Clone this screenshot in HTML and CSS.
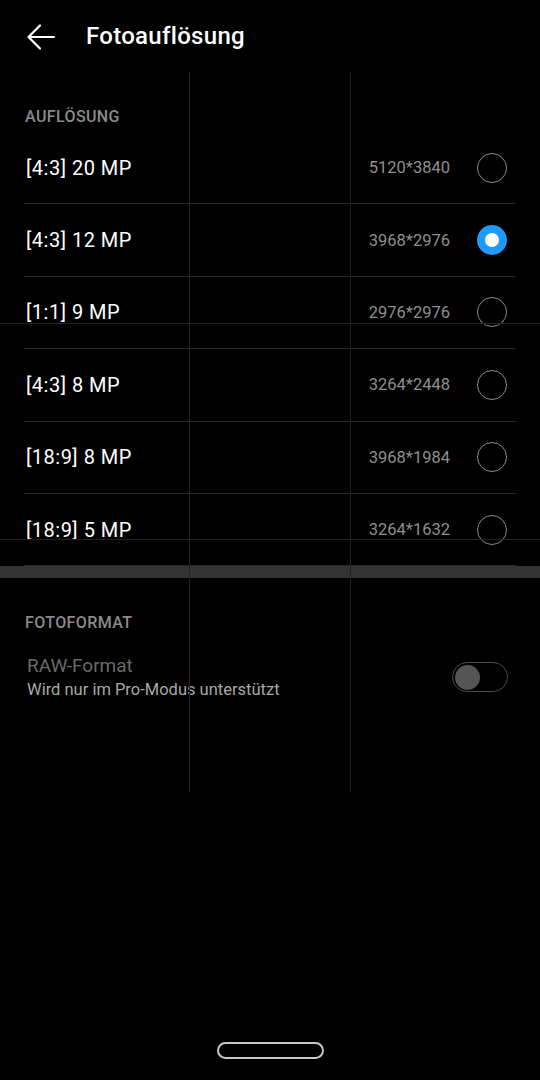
FILE: index.html
```html
<!DOCTYPE html>
<html lang="de">
<head>
    <meta charset="UTF-8">
    <meta name="viewport" content="width=device-width, initial-scale=1.0">
    <title>Fotoauflösung</title>
    <link rel="stylesheet" href="styles.css">
</head>
<body>
    <div class="screen">
        <header class="topbar">
            <svg class="back" width="30" height="30" viewBox="0 0 30 30">
                <path d="M28 15H3M14 3.5L2.5 15L14 26.5" fill="none" stroke="#fff" stroke-width="2.2" stroke-linecap="round" stroke-linejoin="round"/>
            </svg>
            <h1 class="title">Fotoauflösung</h1>
        </header>

        <div class="section-label">AUFLÖSUNG</div>
        <ul class="list">
            <li class="row"><span class="name">[4:3] 20 MP</span><span class="size">5120*3840</span><span class="radio"></span></li>
            <li class="row"><span class="name">[4:3] 12 MP</span><span class="size">3968*2976</span><span class="radio checked"></span></li>
            <li class="row"><span class="name">[1:1] 9 MP</span><span class="size">2976*2976</span><span class="radio"></span></li>
            <li class="row"><span class="name">[4:3] 8 MP</span><span class="size">3264*2448</span><span class="radio"></span></li>
            <li class="row"><span class="name">[18:9] 8 MP</span><span class="size">3968*1984</span><span class="radio"></span></li>
            <li class="row"><span class="name">[18:9] 5 MP</span><span class="size">3264*1632</span><span class="radio"></span></li>
        </ul>
        <div class="band"></div>

        <div class="section-label">FOTOFORMAT</div>
        <div class="switch-row">
            <div class="switch-text">
                <div class="switch-title">RAW-Format</div>
                <div class="switch-sub">Wird nur im Pro-Modus unterstützt</div>
            </div>
            <span class="toggle"><span class="knob"></span></span>
        </div>

        <div class="navbar"><span class="pill"></span></div>

        <!-- camera grid over the list -->
        <div class="grid">
            <span class="vline v1"></span>
            <span class="vline v2"></span>
            <span class="hline h1"></span>
            <span class="hline h2"></span>
        </div>
    </div>
</body>
</html>
```

FILE: styles.css
```css
* {
    box-sizing: border-box;
}
body {
    margin: 0;
    background: #000;
    font-family: Roboto, "Noto Sans", sans-serif;
    color: #fff;
}
.screen {
    position: relative;
    height: 1080px;
    display: flex;
    flex-direction: column;
    overflow: hidden;
}
.topbar {
    height: 72px;
    display: flex;
    align-items: center;
    padding-left: 26px;
}
.back {
    display: block;
    margin-top: 1px;
}
.title {
    margin: 0 0 0 30px;
    font-size: 24px;
    font-weight: 500;
    letter-spacing: 0.3px;
}
.section-label {
    padding: 35px 25px 5px;
    line-height: 20px;
    font-size: 16px;
    font-weight: 500;
    color: #8a8a8a;
    letter-spacing: 0.4px;
}
.list {
    list-style: none;
    margin: 0;
    padding: 0 24px;
}
.row {
    height: 72.4px;
    display: flex;
    align-items: center;
    border-bottom: 1px solid #2a2a2a;
}
.name {
    flex: 1;
    padding-left: 2px;
    font-size: 20px;
    font-weight: 400;
    letter-spacing: 0.5px;
}
.size {
    font-size: 16.5px;
    color: #8f8f8f;
    margin-right: 27px;
}
.radio {
    width: 30px;
    height: 30px;
    border: 1.5px solid #8c8c8c;
    border-radius: 50%;
    margin-right: 9px;
}
.radio.checked {
    border: 8px solid #1e9bf8;
    background: #fff;
}
.band {
    height: 12px;
    background: #333;
}
.switch-row {
    display: flex;
    align-items: center;
    padding: 15px 32px 0 27px;
}
.switch-text {
    flex: 1;
}
.switch-title {
    font-size: 19px;
    line-height: 26px;
    color: #6a6a6a;
}
.switch-sub {
    font-size: 16.5px;
    line-height: 22px;
    color: #a8a8a8;
}
.toggle {
    width: 56px;
    height: 30px;
    border: 1px solid #4a4a4a;
    border-radius: 15px;
    display: flex;
    align-items: center;
    padding-left: 2px;
}
.knob {
    width: 25px;
    height: 25px;
    border-radius: 50%;
    background: #555;
}
.navbar {
    margin-top: auto;
    display: flex;
    justify-content: center;
    padding-bottom: 21px;
}
.pill {
    width: 107px;
    height: 17px;
    border: 2px solid #c8c8c8;
    border-radius: 9px;
}
.grid {
    position: absolute;
    inset: 0;
    pointer-events: none;
}
.vline {
    position: absolute;
    top: 72px;
    width: 1px;
    height: 720px;
    background: #222;
}
.v1 { left: 189px; }
.v2 { left: 350px; }
.hline {
    position: absolute;
    left: 0;
    width: 540px;
    height: 1px;
    background: #222;
}
.h1 { top: 323px; }
.h2 { top: 539px; }
```
